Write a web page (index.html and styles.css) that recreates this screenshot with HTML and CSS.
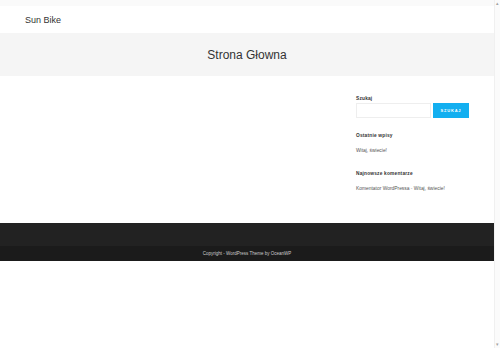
FILE: index.html
```html
<!DOCTYPE html>
<html>
<head>
  <title>Sun Bike</title>
  <link rel="stylesheet" href="styles.css">
</head>
<body>
  <div class="window">
    <div class="page">
      <div class="topbar"></div>
      <header class="site-header">
        <a href="#" class="logo">Sun Bike</a>
      </header>
      <div class="page-header">
        <h1>Strona Głowna</h1>
      </div>
      <div class="content">
        <main class="primary"></main>
        <aside class="sidebar">
          <div class="widget widget-search">
            <h4>Szukaj</h4>
            <form class="search-form">
              <input type="text" class="search-input">
              <button type="submit" class="search-button">SZUKAJ</button>
            </form>
          </div>
          <div class="widget">
            <h4>Ostatnie wpisy</h4>
            <ul>
              <li><a href="#">Witaj, świecie!</a></li>
            </ul>
          </div>
          <div class="widget">
            <h4>Najnowsze komentarze</h4>
            <ul>
              <li><a href="#">Komentator WordPressa</a> - <a href="#">Witaj, świecie!</a></li>
            </ul>
          </div>
        </aside>
      </div>
      <footer>
        <div class="footer-widgets"></div>
        <div class="footer-bottom">Copyright - WordPress Theme by OceanWP</div>
      </footer>
    </div>
    <div class="scrollbar">
      <span class="arrow">&#9652;</span>
      <span class="arrow">&#9662;</span>
    </div>
  </div>
</body>
</html>
```

FILE: styles.css
```css
html, body {
  margin: 0;
  padding: 0;
  height: 100%;
  overflow: hidden;
  background-color: #ffffff;
  font-family: "Liberation Sans", Arial, sans-serif;
}

.window {
  display: flex;
  height: 348px;
}

.page {
  flex: 1;
  display: flex;
  flex-direction: column;
}

.topbar {
  height: 6px;
  background-color: #fafafa;
}

.site-header {
  height: 27px;
  display: flex;
  align-items: center;
  padding-left: 25px;
}

.logo {
  font-size: 9px;
  color: #333333;
  text-decoration: none;
}

.page-header {
  height: 43px;
  background-color: #f5f5f5;
  display: flex;
  align-items: center;
  justify-content: center;
}

.page-header h1 {
  margin: 0;
  font-size: 12px;
  font-weight: normal;
  color: #333333;
}

.content {
  height: 147px;
  display: flex;
  padding: 0 25px 0 25px;
}

.primary {
  flex: 1;
}

.sidebar {
  width: 113px;
  padding-top: 20px;
}

.widget {
  margin-bottom: 18px;
}

.widget h4 {
  margin: 0 0 5px 0;
  font-size: 4.8px;
  font-weight: bold;
  color: #333333;
  letter-spacing: 0.2px;
}

.widget-search {
  margin-bottom: 15px;
}

.widget-search h4 {
  margin-bottom: 2px;
}

.widget ul {
  margin: 0;
  padding: 0;
  list-style: none;
  padding-top: 5px;
}

.widget li {
  font-size: 4.9px;
  color: #929292;
}

.widget li a {
  color: #555555;
  text-decoration: none;
}

.search-form {
  display: flex;
  gap: 2px;
}

.search-input {
  width: 75px;
  height: 15px;
  box-sizing: border-box;
  border: 1px solid #eeeeee;
  padding: 0;
  margin: 0;
}

.search-button {
  width: 36px;
  height: 15px;
  border: none;
  padding: 0;
  margin: 0;
  background-color: #13aff0;
  color: #ffffff;
  font-family: "Liberation Sans", Arial, sans-serif;
  font-size: 4px;
  font-weight: bold;
  letter-spacing: 0.8px;
}

footer {
  display: flex;
  flex-direction: column;
}

.footer-widgets {
  height: 23px;
  background-color: #222222;
}

.footer-bottom {
  height: 15px;
  background-color: #1b1b1b;
  color: #cccccc;
  font-size: 4.5px;
  display: flex;
  align-items: center;
  justify-content: center;
}

.scrollbar {
  width: 6px;
  box-sizing: border-box;
  background-color: #fbfbfb;
  border-left: 1px solid #f0f0f0;
  display: flex;
  flex-direction: column;
  justify-content: space-between;
  align-items: center;
}

.arrow {
  font-size: 5px;
  line-height: 7px;
  color: #a3a3a3;
}
```
